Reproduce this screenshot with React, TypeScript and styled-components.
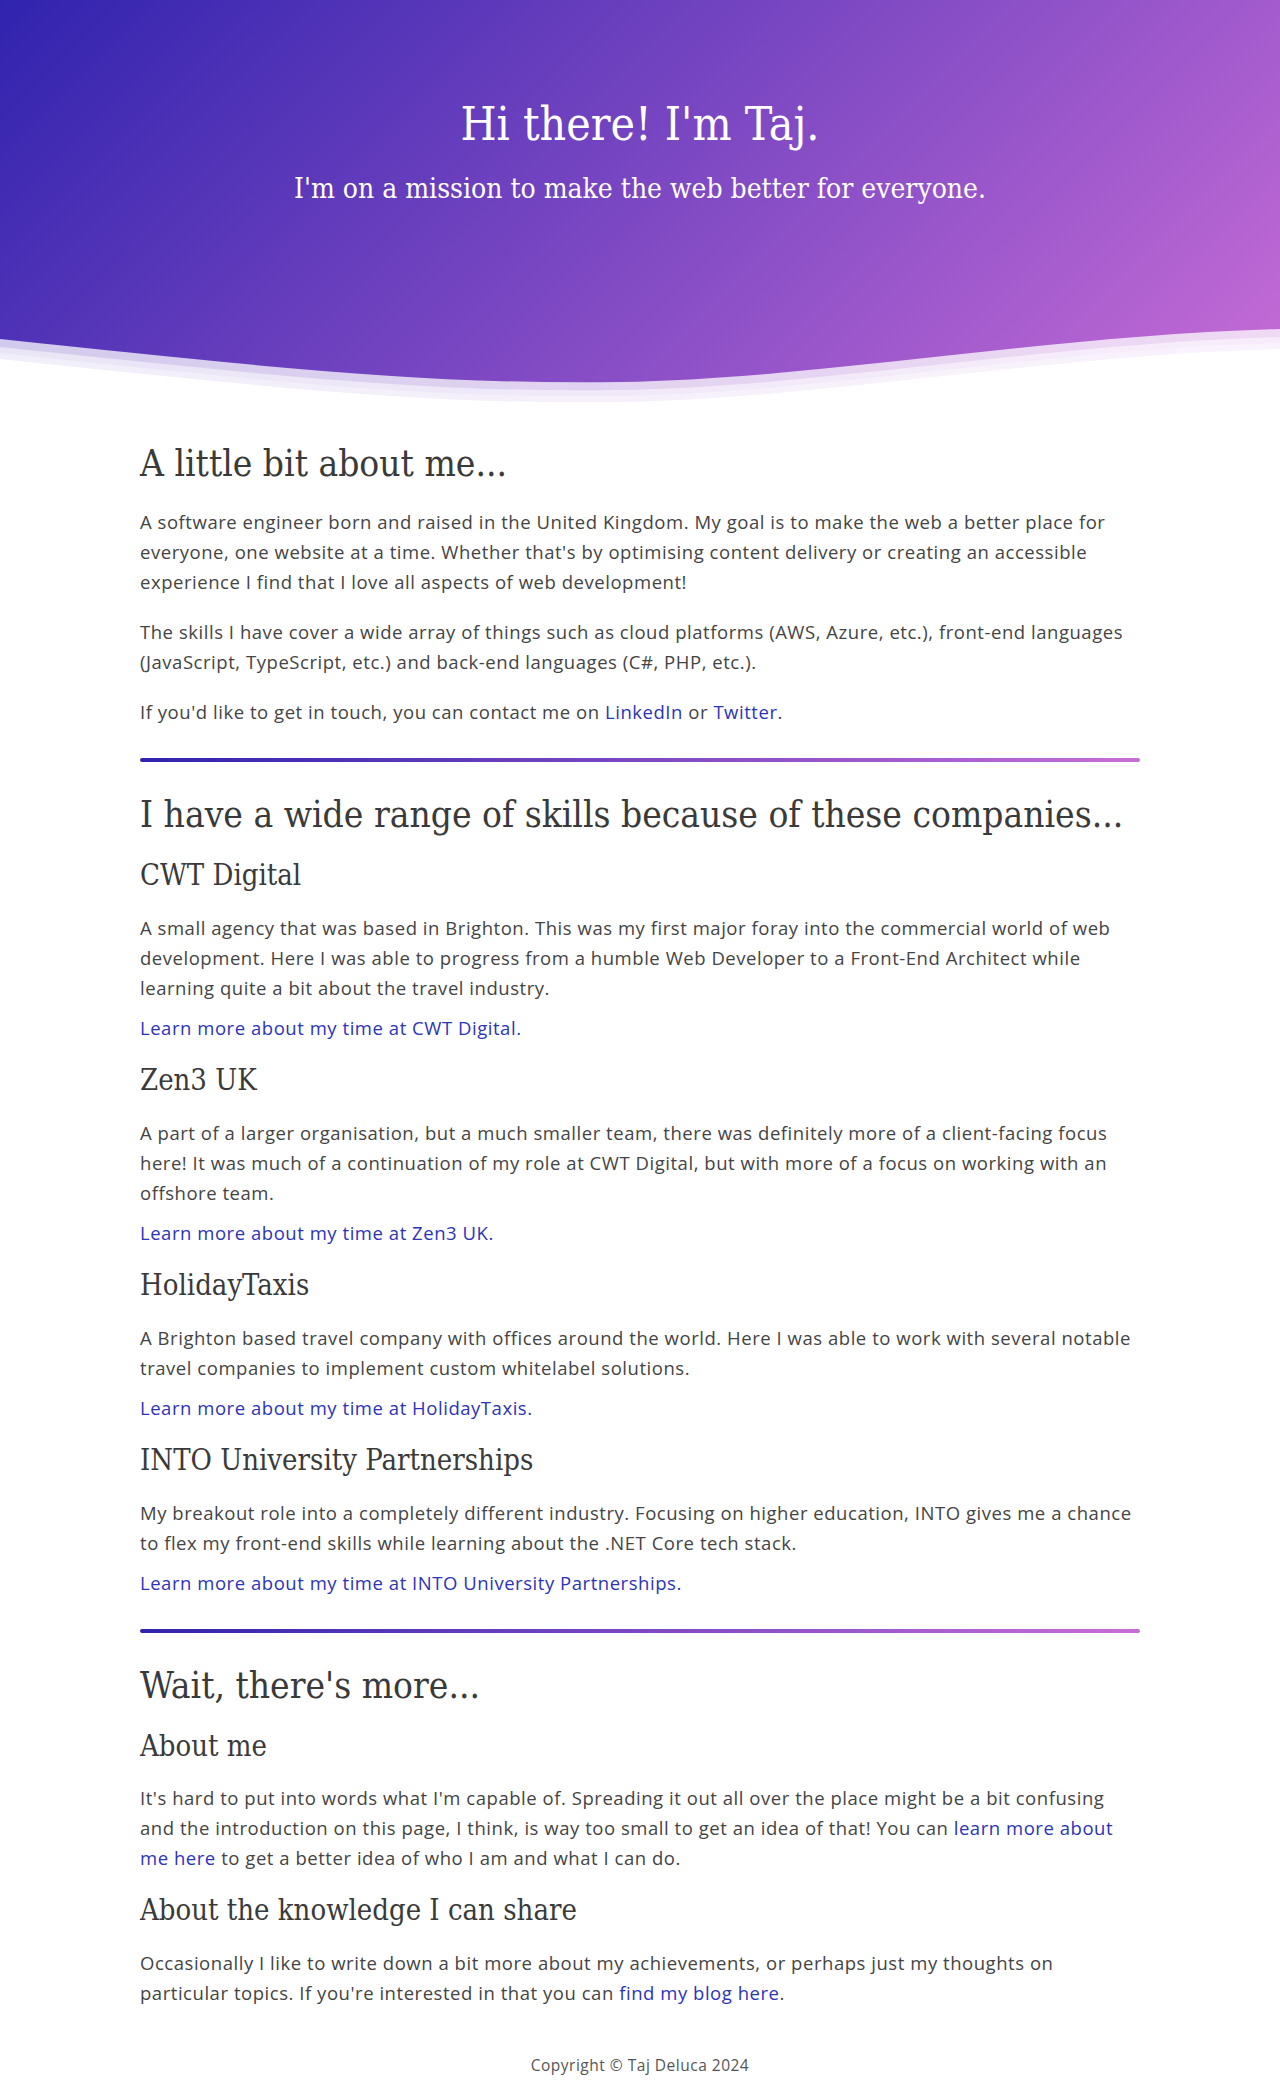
import React from 'react';
import styled, { createGlobalStyle } from 'styled-components';

const GlobalStyle = createGlobalStyle`
  * { box-sizing: border-box; }
  html, body { margin: 0; padding: 0; background: #fff; }
  body {
    font-family: "Open Sans", Lato, sans-serif;
    color: #444;
    -webkit-font-smoothing: antialiased;
  }
`;

const Hero = styled.header`
  position: relative;
  height: 410px;
  padding-top: 97px;
  background: linear-gradient(135deg, #3023ae 0%, #c86dd7 100%);
  color: #fff;
  text-align: center;
`;

const HeroTitle = styled.h1`
  margin: 0;
  font-family: "DejaVu Serif Condensed", "DejaVu Serif", serif;
  font-weight: 400;
  font-size: 46px;
  line-height: 1.2;
`;

const HeroLead = styled.p`
  margin: 20px 0 0;
  font-family: "DejaVu Serif Condensed", "DejaVu Serif", serif;
  font-size: 28px;
  line-height: 1.2;
`;

const WaveSvg = styled.svg`
  position: absolute;
  left: 0;
  bottom: 0;
  width: 100%;
  height: 90px;
  display: block;
`;

const Main = styled.main`
  max-width: 1000px;
  margin: 0 auto;
  padding-top: 32px;
`;

const SectionTitle = styled.h2`
  margin: 0 0 21px;
  font-family: "DejaVu Serif Condensed", "DejaVu Serif", serif;
  font-weight: 400;
  font-size: 36.8px;
  line-height: 1.2;
  color: #3a3a3a;
`;

const SubTitle = styled.h3`
  margin: 0 0 20px;
  font-family: "DejaVu Serif Condensed", "DejaVu Serif", serif;
  font-weight: 400;
  font-size: 29px;
  line-height: 1.2;
  color: #3a3a3a;
`;

const Text = styled.p<{ $tight?: boolean }>`
  margin: 0 0 ${p => (p.$tight ? '10px' : '20px')};
  font-size: 18.5px;
  line-height: 30px;
  letter-spacing: 0.54px;
`;

const Link = styled.a`
  color: #2c34b8;
  text-decoration: none;
`;

const Divider = styled.hr`
  height: 4px;
  margin: 31px 0;
  border: 0;
  border-radius: 2px;
  background: linear-gradient(90deg, #3023ae 0%, #c86dd7 100%);
`;

const Footer = styled.footer`
  padding: 26px 0 22px;
  text-align: center;
  font-size: 15.5px;
  line-height: 22px;
  letter-spacing: 0.5px;
  color: #555;
`;

const wave = (o: number) =>
  `M0 ${19 + o} C250 ${45 + o} 420 ${65 + o} 620 ${62 + o} C820 ${59 + o} 1050 ${15 + o} 1280 ${9 + o} L1280 90 L0 90 Z`;

const Wave = () => (
  <WaveSvg viewBox="0 0 1280 90" preserveAspectRatio="none" aria-hidden="true">
    <path d={wave(0)} fill="#fff" fillOpacity={0.75} />
    <path d={wave(8)} fill="#fff" fillOpacity={0.5} />
    <path d={wave(14)} fill="#fff" fillOpacity={0.35} />
    <path d={wave(20)} fill="#fff" />
  </WaveSvg>
);

const companies = [
  {
    name: 'CWT Digital',
    text: 'A small agency that was based in Brighton. This was my first major foray into the commercial world of web development. Here I was able to progress from a humble Web Developer to a Front-End Architect while learning quite a bit about the travel industry.',
  },
  {
    name: 'Zen3 UK',
    text: 'A part of a larger organisation, but a much smaller team, there was definitely more of a client-facing focus here! It was much of a continuation of my role at CWT Digital, but with more of a focus on working with an offshore team.',
  },
  {
    name: 'HolidayTaxis',
    text: 'A Brighton based travel company with offices around the world. Here I was able to work with several notable travel companies to implement custom whitelabel solutions.',
  },
  {
    name: 'INTO University Partnerships',
    text: 'My breakout role into a completely different industry. Focusing on higher education, INTO gives me a chance to flex my front-end skills while learning about the .NET Core tech stack.',
  },
];

export default function App() {
  return (
    <>
      <GlobalStyle />
      <Hero>
        <HeroTitle>Hi there! I'm Taj.</HeroTitle>
        <HeroLead>I'm on a mission to make the web better for everyone.</HeroLead>
        <Wave />
      </Hero>

      <Main>
        <section>
          <SectionTitle>A little bit about me...</SectionTitle>
          <Text>
            A software engineer born and raised in the United Kingdom. My goal is to make the web a better place for
            everyone, one website at a time. Whether that's by optimising content delivery or creating an accessible
            experience I find that I love all aspects of web development!
          </Text>
          <Text>
            The skills I have cover a wide array of things such as cloud platforms (AWS, Azure, etc.), front-end languages
            (JavaScript, TypeScript, etc.) and back-end languages (C#, PHP, etc.).
          </Text>
          <Text>
            If you'd like to get in touch, you can contact me on <Link href="#">LinkedIn</Link> or{' '}
            <Link href="#">Twitter</Link>.
          </Text>
        </section>

        <Divider />

        <section>
          <SectionTitle>I have a wide range of skills because of these companies...</SectionTitle>
          {companies.map(c => (
            <article key={c.name}>
              <SubTitle>{c.name}</SubTitle>
              <Text $tight>{c.text}</Text>
              <Text>
                <Link href="#">Learn more about my time at {c.name}.</Link>
              </Text>
            </article>
          ))}
        </section>

        <Divider />

        <section>
          <SectionTitle>Wait, there's more...</SectionTitle>
          <SubTitle>About me</SubTitle>
          <Text>
            It's hard to put into words what I'm capable of. Spreading it out all over the place might be a bit confusing
            and the introduction on this page, I think, is way too small to get an idea of that! You can{' '}
            <Link href="#">learn more about me here</Link> to get a better idea of who I am and what I can do.
          </Text>
          <SubTitle>About the knowledge I can share</SubTitle>
          <Text>
            Occasionally I like to write down a bit more about my achievements, or perhaps just my thoughts on
            particular topics. If you're interested in that you can <Link href="#">find my blog here</Link>.
          </Text>
        </section>
      </Main>

      <Footer>Copyright © Taj Deluca 2024</Footer>
    </>
  );
}
